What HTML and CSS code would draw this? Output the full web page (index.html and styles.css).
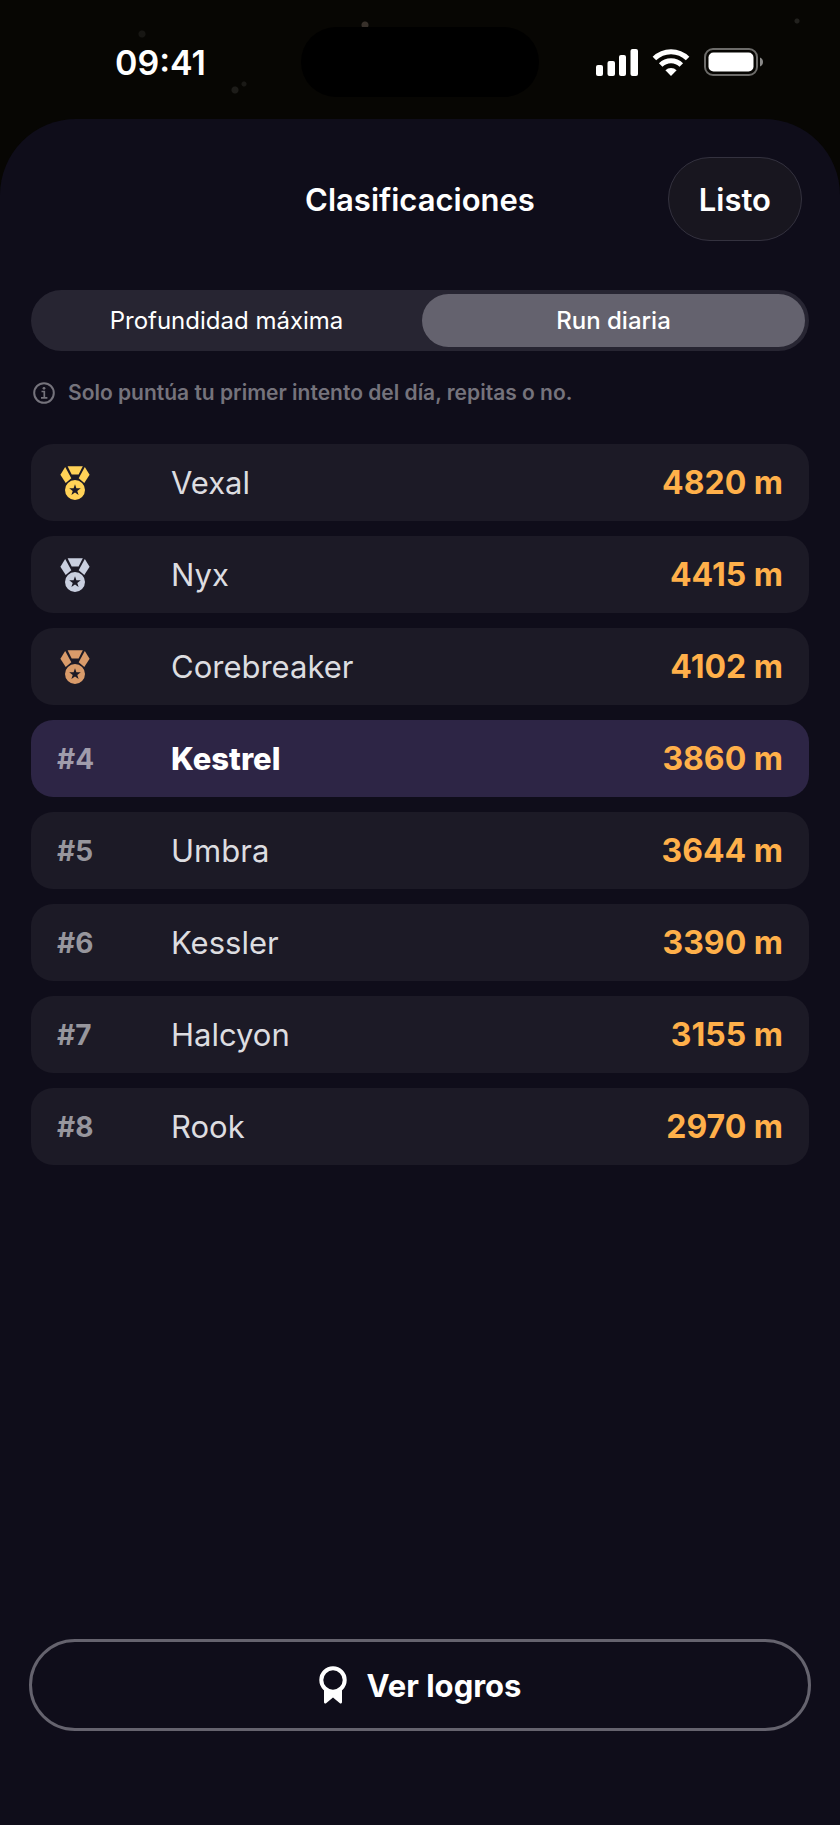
FILE: index.html
```html
<!DOCTYPE html>
<html lang="es">
<head>
    <meta charset="UTF-8">
    <meta name="viewport" content="width=device-width, initial-scale=1.0">
    <title>Clasificaciones</title>
    <link rel="stylesheet" href="styles.css">
</head>
<body>
    <!-- Shared icons -->
    <svg class="sprite" aria-hidden="true">
        <symbol id="medal" viewBox="0 0 30 34">
            <path d="M7.6 0.3h15.2L18.6 8.4h-6.9z"/>
            <path d="M5.2 0.9 11.3 12.2 5.7 17 0.4 8.8z"/>
            <path d="M24.8 0.9 18.7 12.2 24.3 17 29.6 8.8z"/>
            <path fill-rule="evenodd" d="M15 14a10 10 0 1 1 0 20 10 10 0 0 1 0-20zm0 4.2-1.4 4.1H9.2l3.5 2.6-1.3 4.2 3.6-2.5 3.6 2.5-1.3-4.2 3.5-2.6h-4.4z"/>
        </symbol>
    </svg>

    <header class="status-bar">
        <span class="status-time">09:41</span>
        <span class="island"></span>
        <div class="status-icons">
            <svg width="42" height="27" viewBox="0 0 42 27" fill="#fff" aria-hidden="true">
                <rect x="0" y="16" width="7" height="11" rx="2"/>
                <rect x="11.5" y="12" width="7.5" height="15" rx="2"/>
                <rect x="23" y="6" width="7" height="21" rx="2"/>
                <rect x="34.5" y="0" width="7.5" height="27" rx="2"/>
            </svg>
            <svg width="38" height="27" viewBox="0 0 38 27" aria-hidden="true">
                <g fill="none" stroke="#fff" stroke-width="5">
                    <path d="M2.4 9.6a23.5 23.5 0 0 1 33.2 0"/>
                    <path d="M8.7 16a14.6 14.6 0 0 1 20.6 0"/>
                </g>
                <path d="M19 27l-5.6-5.7a8 8 0 0 1 11.2 0z" fill="#fff"/>
            </svg>
            <svg width="60" height="28" viewBox="0 0 60 28" aria-hidden="true">
                <rect x="1" y="1" width="52" height="26" rx="8" fill="none" stroke="#6c6b69" stroke-width="2"/>
                <rect x="4.5" y="4.5" width="45" height="19" rx="5" fill="#fff"/>
                <path d="M56 9.5c4 1.2 4 7.8 0 9z" fill="#8a8988"/>
            </svg>
        </div>
    </header>

    <main class="sheet">
        <div class="sheet-header">
            <h1>Clasificaciones</h1>
            <button type="button" class="done-btn">Listo</button>
        </div>

        <div class="segmented" role="radiogroup" aria-label="Clasificación">
            <label class="segment">
                <input type="radio" name="board" value="depth">
                <span>Profundidad máxima</span>
            </label>
            <label class="segment">
                <input type="radio" name="board" value="daily" checked>
                <span>Run diaria</span>
            </label>
        </div>

        <p class="note">
            <svg width="22" height="22" viewBox="0 0 22 22" fill="none" stroke="currentColor" stroke-width="2" aria-hidden="true">
                <circle cx="11" cy="11" r="9.8"/>
                <path d="M8.5 9.5h2.8v6M8 15.8h6.4" stroke-width="1.7"/>
                <circle cx="11" cy="6.3" r="1.4" fill="currentColor" stroke="none"/>
            </svg>
            Solo puntúa tu primer intento del día, repitas o no.
        </p>

        <ol class="ranking">
            <li class="row">
                <span class="rank gold"><svg class="medal" role="img" aria-label="1"><use href="#medal"/></svg></span>
                <span class="name">Vexal</span>
                <span class="score">4820 m</span>
            </li>
            <li class="row">
                <span class="rank silver"><svg class="medal" role="img" aria-label="2"><use href="#medal"/></svg></span>
                <span class="name">Nyx</span>
                <span class="score">4415 m</span>
            </li>
            <li class="row">
                <span class="rank bronze"><svg class="medal" role="img" aria-label="3"><use href="#medal"/></svg></span>
                <span class="name">Corebreaker</span>
                <span class="score">4102 m</span>
            </li>
            <li class="row current">
                <span class="rank">#4</span>
                <span class="name">Kestrel</span>
                <span class="score">3860 m</span>
            </li>
            <li class="row">
                <span class="rank">#5</span>
                <span class="name">Umbra</span>
                <span class="score">3644 m</span>
            </li>
            <li class="row">
                <span class="rank">#6</span>
                <span class="name">Kessler</span>
                <span class="score">3390 m</span>
            </li>
            <li class="row">
                <span class="rank">#7</span>
                <span class="name">Halcyon</span>
                <span class="score">3155 m</span>
            </li>
            <li class="row">
                <span class="rank">#8</span>
                <span class="name">Rook</span>
                <span class="score">2970 m</span>
            </li>
        </ol>

        <button type="button" class="achievements-btn">
            <svg width="28" height="38" viewBox="0 0 28 38" aria-hidden="true">
                <circle cx="14" cy="14" r="11.7" fill="none" stroke="#fff" stroke-width="4"/>
                <path d="M5 23.5c5 4.5 13 4.5 18 0V36c0 1.500-1.400 2-2.400 1L14 31.5 7.400 37c-1 1-2.400.5-2.400-1z" fill="#fff"/>
            </svg>
            Ver logros
        </button>
    </main>
</body>
</html>
```

FILE: styles.css
```css
* {
    box-sizing: border-box;
}
body {
    margin: 0;
    min-height: 100vh;
    display: flex;
    flex-direction: column;
    background-color: #070603;
    color: #fff;
    font-family: Inter, "Liberation Sans", sans-serif;
}
button {
    font-family: inherit;
    color: inherit;
    cursor: pointer;
}
.sprite {
    display: none;
}

/* Status bar */
.status-bar {
    display: grid;
    grid-template-columns: 1fr 238px 1fr;
    align-items: center;
    justify-items: center;
    height: 119px;
    padding: 5px 20px 0;
    background-image:
        radial-gradient(circle at 142px 34px, #171613 3px, transparent 4px),
        radial-gradient(circle at 235px 90px, #1d1c19 3px, transparent 4px),
        radial-gradient(circle at 244px 84px, #1a1916 2px, transparent 3px),
        radial-gradient(circle at 365px 25px, #37302a 3px, transparent 4px),
        radial-gradient(circle at 797px 21px, #22211e 2px, transparent 3px);
}
.status-time {
    font-size: 34px;
    font-weight: 600;
}
.island {
    width: 100%;
    height: 70px;
    border-radius: 35px;
    background-color: #000;
}
.status-icons {
    display: flex;
    align-items: center;
    gap: 14px;
}

/* Sheet */
.sheet {
    flex: 1;
    display: flex;
    flex-direction: column;
    padding: 38px 31px 94px;
    border-radius: 76px 76px 0 0;
    background-color: #0f0d1a;
}
.sheet-header {
    display: grid;
    grid-template-columns: 1fr auto 1fr;
    align-items: center;
    padding: 0 7px;
}
.sheet-header h1 {
    grid-column: 2;
    margin: 0;
    font-size: 31px;
    font-weight: 600;
}
.done-btn {
    justify-self: end;
    height: 84px;
    padding: 0 30px;
    border: 1px solid #34323f;
    border-radius: 42px;
    background-color: #18161f;
    font-size: 31px;
    font-weight: 600;
}

/* Board picker */
.segmented {
    display: grid;
    grid-template-columns: 1fr 1fr;
    gap: 4px;
    margin-top: 49px;
    padding: 4px;
    border-radius: 31px;
    background-color: #272532;
}
.segment {
    position: relative;
    cursor: pointer;
}
.segment input {
    position: absolute;
    inset: 0;
    margin: 0;
    opacity: 0;
}
.segment span {
    display: block;
    border-radius: 27px;
    font-size: 24px;
    line-height: 53px;
    text-align: center;
}
.segment input:checked + span {
    background-color: #64626e;
    font-weight: 500;
}

.note {
    display: flex;
    align-items: center;
    gap: 13px;
    margin: 29px 0 0 2px;
    color: #75737c;
    font-size: 21px;
    font-weight: 600;
    line-height: 26px;
}

/* Ranking */
.ranking {
    display: flex;
    flex-direction: column;
    gap: 15px;
    margin: 38px 0 48px;
    padding: 0;
    list-style: none;
}
.row {
    display: grid;
    grid-template-columns: 114px 1fr auto;
    align-items: center;
    height: 77px;
    padding: 0 26px;
    border-radius: 22px;
    background-color: #1c1a26;
}
.row.current {
    background-color: #2d2545;
}
.rank {
    color: #97969d;
    font-size: 28px;
    font-weight: 700;
}
.current .rank {
    color: #a09cab;
}
.medal {
    display: block;
    width: 30px;
    height: 34px;
    margin-left: 3px;
    fill: currentColor;
}
.gold {
    color: #ffd257;
}
.silver {
    color: #c9cfdf;
}
.bronze {
    color: #d99b6a;
}
.name {
    color: #dddde0;
    font-size: 31px;
}
.current .name {
    color: #fff;
    font-weight: 800;
}
.score {
    color: #ffb04a;
    font-size: 32px;
    font-weight: 700;
}

.achievements-btn {
    display: flex;
    align-items: center;
    justify-content: center;
    gap: 20px;
    height: 92px;
    margin: auto -2px 0;
    border: 3px solid #65636e;
    border-radius: 46px;
    background-color: transparent;
    font-size: 31px;
    font-weight: 700;
}
```
